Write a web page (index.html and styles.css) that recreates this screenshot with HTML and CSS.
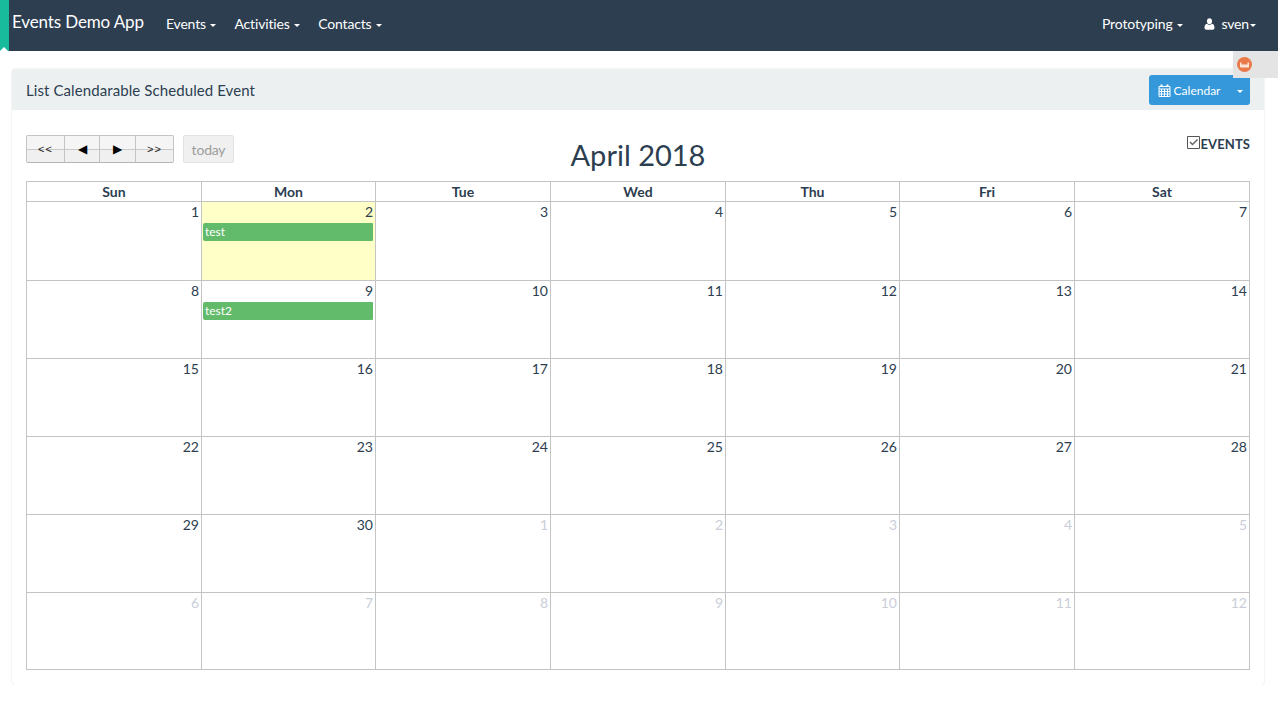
FILE: index.html
```html
<!DOCTYPE html>
<html lang="en">
<head>
    <meta charset="UTF-8">
    <title>List Calendarable Scheduled Event</title>
    <link rel="stylesheet" href="styles.css">
</head>
<body>
    <nav class="navbar">
        <div class="env-strip"></div>
        <a class="brand">Events Demo App</a>
        <ul class="nav">
            <li>Events <span class="caret"></span></li>
            <li>Activities <span class="caret"></span></li>
            <li>Contacts <span class="caret"></span></li>
        </ul>
        <ul class="nav nav-right">
            <li>Prototyping <span class="caret"></span></li>
            <li class="user">
                <svg class="icon-user" width="11" height="12" viewBox="0 0 11 12"><path fill="#fff" d="M5.5 0.2C3.9 0.2 2.9 1.5 2.9 3.2C2.9 4.9 4 6.2 5.5 6.2C7 6.2 8.1 4.9 8.1 3.2C8.1 1.5 7.1 0.2 5.5 0.2ZM3 5.8C1.300 6.100 0.500 7.400 0.500 9.800C0.500 11 1.200 11.700 2.300 11.700H8.700C9.800 11.700 10.500 11 10.500 9.800C10.500 7.400 9.700 6.100 8 5.800C7.400 6.500 6.500 6.900 5.500 6.900C4.500 6.900 3.600 6.500 3 5.800Z"/></svg>
                sven<span class="caret"></span>
            </li>
        </ul>
    </nav>

    <div class="toolbar-badge">
        <svg width="15" height="15" viewBox="0 0 15 15"><circle cx="7.500" cy="7.500" r="7.500" fill="#ea7a4a"/><path fill="#fbe6dc" d="M3 5.500H4.500V7.500H10.500V5.500H12V9.500C12 10.200 11.500 10.500 11 10.500H4C3.500 10.500 3 10.200 3 9.500Z"/></svg>
    </div>

    <div class="panel">
        <div class="panel-heading">
            <h3>List Calendarable Scheduled Event</h3>
            <div class="btn-group">
                <button class="btn-main">
                    <svg width="13" height="13" viewBox="0 0 13 13"><path fill="none" stroke="#fff" d="M1 2.500H12V12.500H1ZM1 5H12M3.500 5V12.500M6.500 5V12.500M9.500 5V12.500M1 7.500H12M1 10H12"/><path stroke="#fff" stroke-width="2" d="M3.500 0.500V3M9.500 0.500V3"/></svg>
                    Calendar
                </button>
                <button class="btn-toggle"><span class="caret"></span></button>
            </div>
        </div>
        <div class="panel-body">
            <div class="cal-header">
                <div class="cal-buttons">
                    <div class="nav-group">
                        <button class="cal-btn">&lt;&lt;</button>
                        <button class="cal-btn arrow">◀</button>
                        <button class="cal-btn arrow">▶</button>
                        <button class="cal-btn">&gt;&gt;</button>
                    </div>
                    <button class="today">today</button>
                </div>
                <h2>April 2018</h2>
                <label class="filter">
                    <svg width="13" height="13" viewBox="0 0 13 13"><path fill="none" stroke="#555" d="M0.500 0.500H12.500V12.500H0.500Z"/><path fill="none" stroke="#666" stroke-width="1.500" d="M3 6L5.500 8.500L10.500 3.500"/></svg>EVENTS
                </label>
            </div>
            <table class="calendar">
                <thead>
                    <tr><th>Sun</th><th>Mon</th><th>Tue</th><th>Wed</th><th>Thu</th><th>Fri</th><th>Sat</th></tr>
                </thead>
                <tbody>
                    <tr>
                        <td><div class="num">1</div></td>
                        <td class="today-cell"><div class="num">2</div><div class="event">test</div></td>
                        <td><div class="num">3</div></td>
                        <td><div class="num">4</div></td>
                        <td><div class="num">5</div></td>
                        <td><div class="num">6</div></td>
                        <td><div class="num">7</div></td>
                    </tr>
                    <tr>
                        <td><div class="num">8</div></td>
                        <td><div class="num">9</div><div class="event">test2</div></td>
                        <td><div class="num">10</div></td>
                        <td><div class="num">11</div></td>
                        <td><div class="num">12</div></td>
                        <td><div class="num">13</div></td>
                        <td><div class="num">14</div></td>
                    </tr>
                    <tr>
                        <td><div class="num">15</div></td>
                        <td><div class="num">16</div></td>
                        <td><div class="num">17</div></td>
                        <td><div class="num">18</div></td>
                        <td><div class="num">19</div></td>
                        <td><div class="num">20</div></td>
                        <td><div class="num">21</div></td>
                    </tr>
                    <tr>
                        <td><div class="num">22</div></td>
                        <td><div class="num">23</div></td>
                        <td><div class="num">24</div></td>
                        <td><div class="num">25</div></td>
                        <td><div class="num">26</div></td>
                        <td><div class="num">27</div></td>
                        <td><div class="num">28</div></td>
                    </tr>
                    <tr>
                        <td><div class="num">29</div></td>
                        <td><div class="num">30</div></td>
                        <td class="other"><div class="num">1</div></td>
                        <td class="other"><div class="num">2</div></td>
                        <td class="other"><div class="num">3</div></td>
                        <td class="other"><div class="num">4</div></td>
                        <td class="other"><div class="num">5</div></td>
                    </tr>
                    <tr class="last-row">
                        <td class="other"><div class="num">6</div></td>
                        <td class="other"><div class="num">7</div></td>
                        <td class="other"><div class="num">8</div></td>
                        <td class="other"><div class="num">9</div></td>
                        <td class="other"><div class="num">10</div></td>
                        <td class="other"><div class="num">11</div></td>
                        <td class="other"><div class="num">12</div></td>
                    </tr>
                </tbody>
            </table>
        </div>
    </div>
</body>
</html>
```

FILE: styles.css
```css
* {
    box-sizing: border-box;
}
body {
    margin: 0;
    font-family: Lato, "Liberation Sans", sans-serif;
    font-size: 14px;
    color: #2c3e50;
    background-color: #fff;
    overflow: hidden;
}
.navbar {
    position: relative;
    display: flex;
    align-items: flex-start;
    height: 51px;
    padding-left: 12px;
    background-color: #2c3e50;
    color: #fff;
}
.env-strip {
    position: absolute;
    left: 0;
    top: 0;
    width: 9px;
    height: 51px;
    background-color: #18bc9c;
}
.env-strip::after {
    content: "";
    position: absolute;
    left: 0;
    bottom: 0;
    border-left: 4.5px solid transparent;
    border-right: 4.5px solid transparent;
    border-bottom: 4px solid #fff;
}
.brand {
    font-size: 17px;
    letter-spacing: -0.13px;
    line-height: 44px;
    margin-right: 13px;
    white-space: nowrap;
}
.nav {
    display: flex;
    list-style: none;
    margin: 0;
    padding: 0;
}
.nav li {
    padding: 0 9px;
    letter-spacing: -0.15px;
    line-height: 47px;
    white-space: nowrap;
}
.nav-right {
    margin-left: auto;
    padding-right: 13px;
}
.nav-right .user {
    padding-left: 12px;
    padding-right: 9px;
}
.icon-user {
    vertical-align: -1px;
    margin-right: 3px;
}
.caret {
    display: inline-block;
    width: 0;
    height: 0;
    margin-left: 1px;
    vertical-align: middle;
    border-top: 3px solid currentColor;
    border-left: 3px solid transparent;
    border-right: 3px solid transparent;
}
.toolbar-badge {
    position: absolute;
    left: 1233px;
    top: 51px;
    width: 45px;
    height: 27px;
    background-color: #e4e4e4;
    padding: 6px 0 0 3.5px;
}
.toolbar-badge svg {
    display: block;
}
.panel {
    margin: 18px 14px 0 12px;
    height: 616px;
    border-radius: 4px;
    box-shadow: 0 0 2px rgba(0, 0, 0, 0.16);
}
.panel-heading {
    display: flex;
    justify-content: space-between;
    align-items: center;
    height: 41px;
    padding: 0 14px;
    background-color: #ecf0f1;
    border-radius: 3px 3px 0 0;
}
.panel-heading h3 {
    margin: 0;
    font-size: 15px;
    font-weight: 400;
    letter-spacing: 0.09px;
}
.btn-group {
    display: flex;
    height: 30px;
    margin-top: 1px;
    background-color: #3498db;
    border-radius: 3px;
}
.btn-group button {
    font-family: inherit;
    font-size: 12px;
    color: #fff;
    background: none;
    border: none;
    padding: 0;
}
.btn-main {
    width: 80px;
    text-align: center;
    white-space: nowrap;
}
.btn-main svg {
    vertical-align: -2px;
}
.btn-toggle {
    width: 21px;
    padding-right: 2px;
    border-left: 1px solid #3192d4;
}
.panel-body {
    padding: 0 14px;
}
.cal-header {
    position: relative;
    height: 71px;
}
.cal-buttons {
    display: flex;
    padding-top: 25px;
}
.nav-group {
    display: flex;
    height: 28px;
    margin-right: 9px;
    border: 1px solid #c4c4c4;
    border-bottom-color: #b4b4b4;
    border-radius: 2px;
    background: linear-gradient(#f5f5f5 50%, #c9c9c9 50%, #c9c9c9 calc(50% + 1px), #f0f0f0 calc(50% + 1px));
}
.cal-btn {
    height: 26px;
    padding: 0;
    font-family: "Liberation Sans", sans-serif;
    font-size: 11px;
    letter-spacing: 1px;
    color: #222;
    background: none;
    border: none;
    border-left: 1px solid #c4c4c4;
    width: 35px;
}
.cal-btn:first-child {
    border-left: none;
    width: 37px;
}
.cal-btn:last-child {
    width: 38px;
}
.cal-btn.arrow {
    font-size: 12px;
    letter-spacing: 0;
    color: #000;
}
.arrow + .arrow {
    width: 36px;
}
.today {
    width: 51px;
    height: 28px;
    padding: 0;
    font-family: inherit;
    font-size: 14px;
    letter-spacing: -0.2px;
    color: #9c9c9c;
    background-color: #f0f0f0;
    border: 1px solid #e2e2e2;
    border-radius: 2px;
}
.cal-header h2 {
    position: absolute;
    left: 0;
    right: 0;
    top: 27px;
    margin: 0;
    font-size: 29px;
    font-weight: 400;
    line-height: 36px;
    text-align: center;
}
.filter {
    position: absolute;
    right: 0;
    top: 26px;
    font-weight: 700;
    font-size: 13px;
    letter-spacing: 0.1px;
    line-height: 17px;
}
.filter svg {
    vertical-align: 0;
}
.calendar {
    width: 1224px;
    table-layout: fixed;
    border-collapse: collapse;
}
.calendar th, .calendar td {
    border: 1px solid #c4c4c4;
    padding: 0;
}
.calendar th {
    width: 175px;
    height: 20px;
    font-size: 14px;
    font-weight: 700;
    line-height: 19px;
}
.calendar th:nth-child(2), .calendar th:nth-child(5) {
    width: 174px;
}
.calendar td {
    height: 78px;
    vertical-align: top;
}
.calendar tbody tr:first-child td {
    height: 79px;
}
.calendar .last-row td {
    height: 77px;
}
.num {
    padding: 1px 2px 0 0;
    text-align: right;
    line-height: 17px;
}
.other .num {
    color: #c9ced8;
}
.today-cell {
    background-color: #ffffc8;
}
.event {
    height: 18px;
    margin: 3px 2px 0 1px;
    padding-left: 2px;
    font-size: 12px;
    line-height: 17px;
    color: #fff;
    background-color: #61bb6a;
    border-radius: 2px 1px 1px 2px;
}
```
